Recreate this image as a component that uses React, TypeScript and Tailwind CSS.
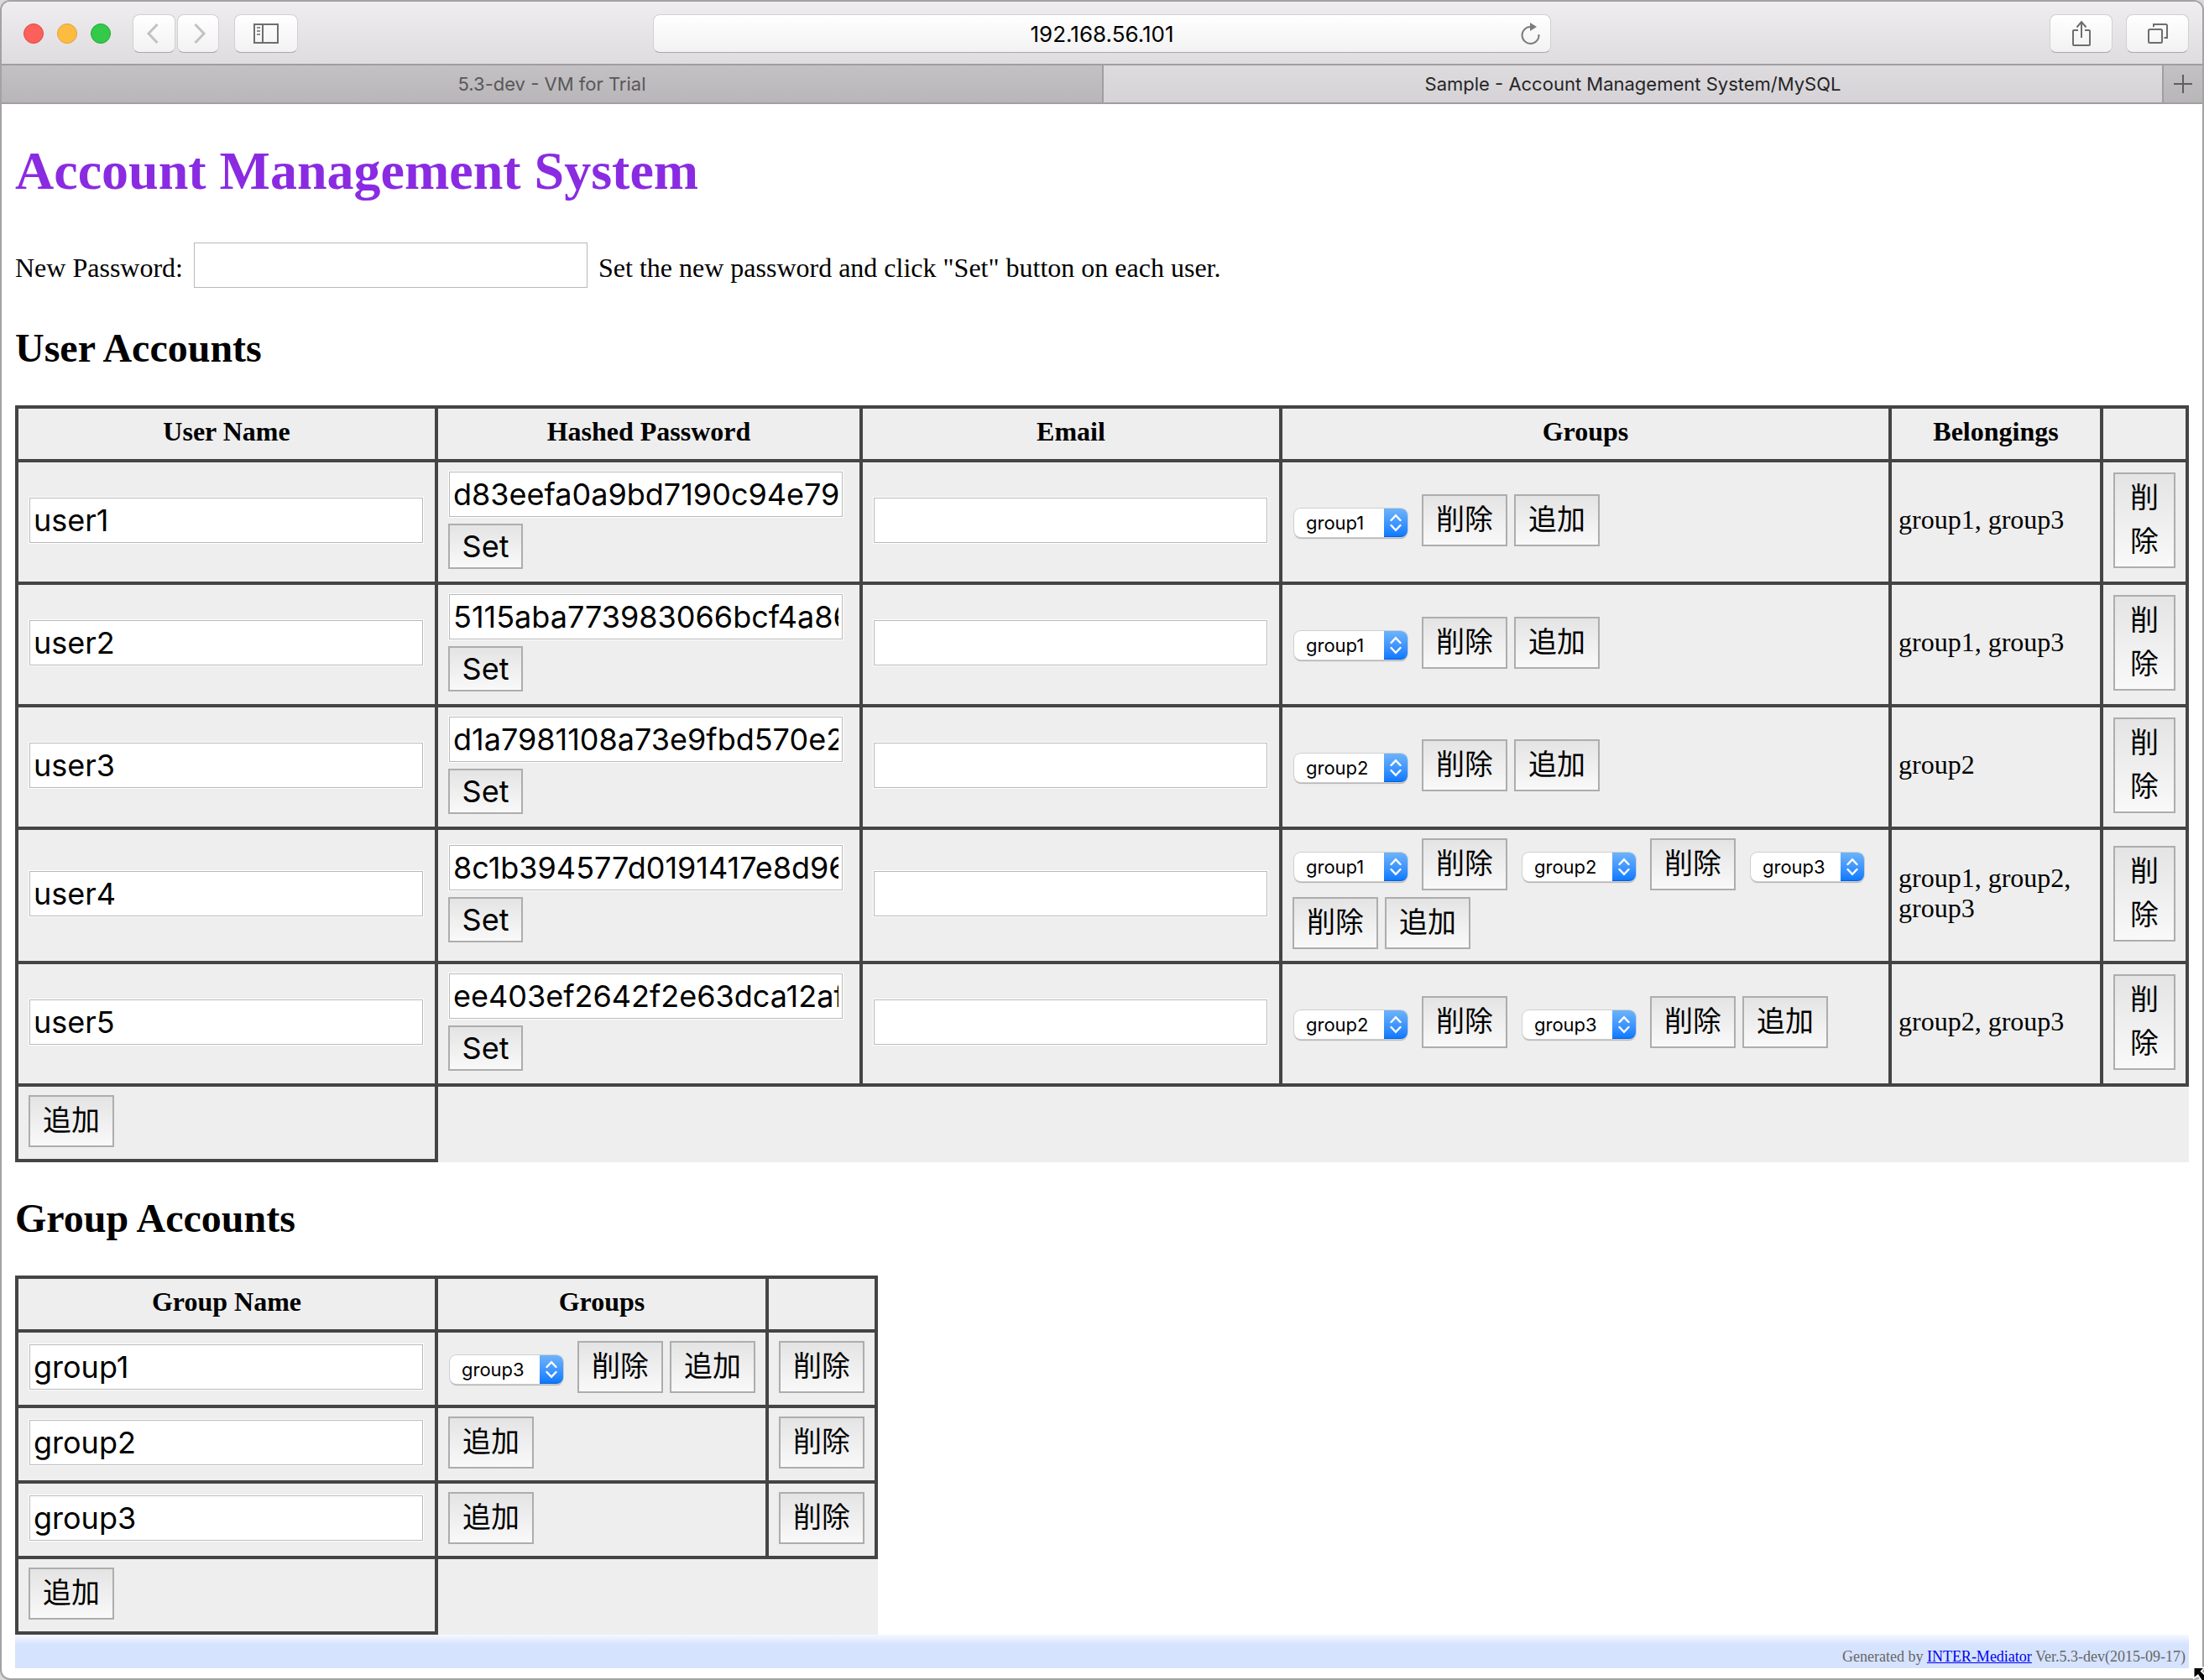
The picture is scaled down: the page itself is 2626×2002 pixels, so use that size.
import React, { useId, useState } from "react";

const GROUPS = ["group1", "group2", "group3"];

type User = { name: string; hash: string; groups: string[]; belongings: string };

const USERS: User[] = [
  { name: "user1", hash: "d83eefa0a9bd7190c94e7911688503737a99db0154455354", groups: ["group1"], belongings: "group1, group3" },
  { name: "user2", hash: "5115aba773983066bcf4a8655ddac8525c1d3c6354455354", groups: ["group1"], belongings: "group1, group3" },
  { name: "user3", hash: "d1a7981108a73e9fbd570e23ecca87c2c5cb967554455354", groups: ["group2"], belongings: "group2" },
  { name: "user4", hash: "8c1b394577d0191417e8d962c5f6e3ca15068f8254455354", groups: ["group1", "group2", "group3"], belongings: "group1, group2, group3" },
  { name: "user5", hash: "ee403ef2642f2e63dca12af72856620e6a24102d54455354", groups: ["group2", "group3"], belongings: "group2, group3" },
];

const GROUP_ROWS: { name: string; groups: string[] }[] = [
  { name: "group1", groups: ["group3"] },
  { name: "group2", groups: [] },
  { name: "group3", groups: [] },
];

const CELL = "border-4 border-[#444] px-3 pt-2.5 pb-3.5 text-left align-middle";
const HEAD = "h-16 border-4 border-[#444] px-2 pb-1.5 text-center align-middle font-bold";

function TextField({ label, initial = "" }: { label: string; initial?: string }) {
  const [value, setValue] = useState(initial);
  return (
    <input
      type="text"
      aria-label={label}
      value={value}
      onChange={(e) => setValue(e.target.value)}
      className="ml-px block h-[54px] w-full max-w-[469px] border border-[#b9b9b9] bg-white px-1 font-[Inter,sans-serif] text-[36px] leading-none text-black outline outline-white"
    />
  );
}

function PushButton({ children, className = "" }: { children: React.ReactNode; className?: string }) {
  return (
    <button
      type="button"
      className={
        "border-2 border-[#adadad] bg-linear-to-b from-[#e4e4e4] to-[#f9f9f9] px-[15px] pb-1.5 font-['Noto_Sans_CJK_JP',sans-serif] text-[34px] leading-[52px] text-black " +
        className
      }
    >
      {children}
    </button>
  );
}

function GroupSelect({ initial, label }: { initial: string; label: string }) {
  const [value, setValue] = useState(initial);
  return (
    <div className="relative mt-1.5 mr-[9px] ml-0.5 h-[34px] w-[135px] rounded-lg bg-white shadow-[0_0_0_1px_#cfcfcf,0_2px_1px_#b0b0b0]">
      <select
        aria-label={label}
        value={value}
        onChange={(e) => setValue(e.target.value)}
        className="block h-full w-full appearance-none bg-transparent pl-3.5 font-[Inter,sans-serif] text-[22px] leading-7 text-black"
      >
        {GROUPS.map((g) => (
          <option key={g}>{g}</option>
        ))}
      </select>
      <span className="pointer-events-none absolute inset-y-0 right-0 flex w-7 items-center justify-center rounded-r-lg border-b border-[#0560e0] bg-linear-to-b from-[#6cb3fa] to-[#087aff]">
        <svg width="14" height="22" viewBox="0 0 14 22" fill="none" stroke="#fff" strokeWidth="2.400" strokeLinecap="round">
          <path d="M1.500 8 7 2.200 12.500 8M1.500 14 7 19.800 12.500 14" />
        </svg>
      </span>
    </div>
  );
}

function GroupPicker({ groups, owner }: { groups: string[]; owner: string }) {
  return (
    <div className="flex flex-wrap items-center gap-2">
      {groups.map((g, i) => (
        <React.Fragment key={g}>
          <GroupSelect initial={g} label={`${owner} group ${i + 1}`} />
          <PushButton className={i < groups.length - 1 ? "mr-2" : ""}>削除</PushButton>
        </React.Fragment>
      ))}
      <PushButton>追加</PushButton>
    </div>
  );
}

function ToolButton({ label, className, children }: { label: string; className: string; children: React.ReactNode }) {
  return (
    <button
      type="button"
      aria-label={label}
      className={
        "flex h-[46px] items-center justify-center rounded-lg border border-[#d2d0d2] border-b-[#a9a7a9] bg-linear-to-b from-white to-[#f2f2f2] " +
        className
      }
    >
      {children}
    </button>
  );
}

function Toolbar() {
  return (
    <header className="flex h-[74px] items-center bg-linear-to-b from-[#efedf0] to-[#dedcdf] px-4 pt-0.5">
      <div className="flex flex-1 items-center">
        <div className="ml-2.5 flex gap-4">
          <span className="size-6 rounded-full border border-[#e2463f] bg-[#fc605b]" />
          <span className="size-6 rounded-full border border-[#e1a03a] bg-[#fdbc40]" />
          <span className="size-6 rounded-full border border-[#24a83a] bg-[#33c949]" />
        </div>
        <div className="ml-[26px] flex gap-0.5">
          <ToolButton label="Back" className="w-[51px] pr-1">
            <svg width="16" height="26" viewBox="0 0 16 26" fill="none" stroke="#c2c2c2" strokeWidth="3"><path d="M13.500 2 3 13l10.500 11" /></svg>
          </ToolButton>
          <ToolButton label="Forward" className="w-[50px] pl-1">
            <svg width="16" height="26" viewBox="0 0 16 26" fill="none" stroke="#c2c2c2" strokeWidth="3"><path d="M2.500 2 13 13 2.500 24" /></svg>
          </ToolButton>
        </div>
        <ToolButton label="Sidebar" className="ml-[18px] w-[76px]">
          <svg width="30" height="24" viewBox="0 0 30 24" fill="none" stroke="#6e6e6e" strokeWidth="2">
            <rect x="1" y="1" width="28" height="22" />
            <path d="M11 1v22" />
            <path d="M4 5h4M4 9h4M4 13h4" stroke="#8e8e8e" />
          </svg>
        </ToolButton>
      </div>
      <div className="relative flex h-[46px] w-[1070px] items-center rounded-lg border border-[#d2d0d2] border-b-[#a9a7a9] bg-linear-to-b from-white to-[#f2f2f2]">
        <input
          type="text"
          aria-label="Address"
          defaultValue="192.168.56.101"
          className="w-full bg-transparent pt-0.5 text-center font-[Inter,sans-serif] text-[26px] leading-8 text-black"
        />
        <button type="button" aria-label="Reload" className="absolute right-3">
          <svg width="23" height="28" viewBox="0 0 23 28" fill="none">
            <path d="M11 6a10 10 0 1 0 10.500 9" stroke="#7c7c7c" strokeWidth="2" />
            <path d="M11 1v10l8-5z" fill="#7c7c7c" />
          </svg>
        </button>
      </div>
      <div className="flex flex-1 justify-end gap-4">
        <ToolButton label="Share" className="w-[75px]">
          <svg width="24" height="32" viewBox="0 0 24 32" fill="none" stroke="#6e6e6e" strokeWidth="2">
            <path d="M8 12H3a1 1 0 0 0-1 1v16a1 1 0 0 0 1 1h18a1 1 0 0 0 1-1V13a1 1 0 0 0-1-1h-5M12 21V2M6.500 8.500 12 2l5.500 6.500" />
          </svg>
        </ToolButton>
        <ToolButton label="Show tabs" className="w-[75px]">
          <svg width="26" height="26" viewBox="0 0 26 26" fill="none" stroke="#6e6e6e" strokeWidth="2">
            <rect x="2" y="8" width="16" height="16" rx="1.500" />
            <path d="M8 5V2h14.500a1.500 1.500 0 0 1 1.500 1.500V18h-3.500" />
          </svg>
        </ToolButton>
      </div>
    </header>
  );
}

function TabBar() {
  return (
    <nav className="flex h-12 border-y-2 border-[#a09ea0] font-[Inter,sans-serif] text-[22px] leading-7">
      <button type="button" className="w-1/2 bg-linear-to-b from-[#c3c1c3] to-[#b8b6b8] text-[#59575a]">5.3-dev - VM for Trial</button>
      <button type="button" className="flex-1 border-x-2 border-[#a09ea0] bg-linear-to-b from-[#dddbde] to-[#d5d3d6] text-[#262527]">
        Sample - Account Management System/MySQL
      </button>
      <button type="button" aria-label="New tab" className="flex w-[46px] items-center justify-center bg-linear-to-b from-[#c3c1c3] to-[#b8b6b8]">
        <svg width="22" height="22" viewBox="0 0 22 22" stroke="#5f5d5f" strokeWidth="2"><path d="M11 0v22M0 11h22" /></svg>
      </button>
    </nav>
  );
}

export default function App() {
  const pw = useId();
  const [password, setPassword] = useState("");
  return (
    <div className="relative flex min-h-screen flex-col bg-[#d9d9d9]">
      <div className="flex-1 overflow-hidden rounded-xl border-2 border-[#a3a3a3] bg-white">
        <Toolbar />
        <TabBar />
        <main className="px-4 pb-2 font-['Liberation_Serif','Noto_Sans_CJK_JP',serif] text-[32px] leading-9 text-black">
          <h1 className="pt-11 text-[64px] leading-[72px] font-bold text-[#8a2be2]">Account Management System</h1>
          <div className="mt-[49px] flex items-center">
            <label htmlFor={pw} className="mr-[13px] pt-1.5">New Password:</label>
            <input
              id={pw}
              type="text"
              value={password}
              onChange={(e) => setPassword(e.target.value)}
              className="h-[54px] w-[469px] border border-[#b9b9b9] bg-white px-1 font-[Inter,sans-serif] text-[36px]"
            />
            <p className="ml-[13px] pt-1.5">Set the new password and click "Set" button on each user.</p>
          </div>
          <h2 className="mt-11 text-[48px] leading-[56px] font-bold">User Accounts</h2>
          <table className="mt-10 w-full table-fixed border-collapse bg-[#eee]">
            <colgroup>
              <col className="w-[500px]" />
              <col className="w-[506px]" />
              <col className="w-[500px]" />
              <col />
              <col className="w-[252px]" />
              <col className="w-[102px]" />
            </colgroup>
            <thead>
              <tr>
                <th className={HEAD}>User Name</th>
                <th className={HEAD}>Hashed Password</th>
                <th className={HEAD}>Email</th>
                <th className={HEAD}>Groups</th>
                <th className={HEAD}>Belongings</th>
                <th className={HEAD} />
              </tr>
            </thead>
            <tbody>
              {USERS.map((u) => (
                <tr key={u.name} className="h-[146px]">
                  <td className={CELL}><TextField label="User Name" initial={u.name} /></td>
                  <td className={CELL}>
                    <div className="flex flex-col items-start gap-2">
                      <TextField label="Hashed Password" initial={u.hash} />
                      <button
                        type="button"
                        className="h-[54px] w-[89px] border-2 border-[#adadad] bg-linear-to-b from-[#e4e4e4] to-[#f9f9f9] font-[Inter,sans-serif] text-[36px] leading-none"
                      >
                        Set
                      </button>
                    </div>
                  </td>
                  <td className={CELL}><TextField label="Email" /></td>
                  <td className={CELL}><GroupPicker groups={u.groups} owner={u.name} /></td>
                  <td className="border-4 border-[#444] px-2 pb-1.5 align-middle">{u.belongings}</td>
                  <td className={CELL}>
                    <button
                      type="button"
                      className="block w-full border-2 border-[#adadad] bg-linear-to-b from-[#e4e4e4] to-[#f9f9f9] px-4 pb-1.5 font-['Noto_Sans_CJK_JP',sans-serif] text-[34px] leading-[52px]"
                    >
                      削除
                    </button>
                  </td>
                </tr>
              ))}
              <tr className="h-[90px]">
                <td className={CELL}><PushButton className="block">追加</PushButton></td>
              </tr>
            </tbody>
          </table>
          <h2 className="mt-[39px] text-[48px] leading-[56px] font-bold">Group Accounts</h2>
          <table className="mt-10 w-[1028px] table-fixed border-collapse bg-[#eee]">
            <colgroup>
              <col className="w-[500px]" />
              <col className="w-[394px]" />
              <col className="w-[130px]" />
            </colgroup>
            <thead>
              <tr>
                <th className={HEAD}>Group Name</th>
                <th className={HEAD}>Groups</th>
                <th className={HEAD} />
              </tr>
            </thead>
            <tbody>
              {GROUP_ROWS.map((g) => (
                <tr key={g.name} className="h-[90px]">
                  <td className={CELL}><TextField label="Group Name" initial={g.name} /></td>
                  <td className={CELL}><GroupPicker groups={g.groups} owner={g.name} /></td>
                  <td className={CELL}><PushButton className="block">削除</PushButton></td>
                </tr>
              ))}
              <tr className="h-[90px]">
                <td className={CELL}><PushButton className="block">追加</PushButton></td>
              </tr>
            </tbody>
          </table>
          <footer className="bg-linear-to-b from-[#f5f8ff] to-[#d6e3fe] to-30% pt-4 pr-1 pb-1 text-right text-[18px] leading-5 text-[#666]">
            Generated by <a href="#inter-mediator" className="text-[#0000ee] underline">INTER-Mediator</a> Ver.5.3-dev(2015-09-17)
          </footer>
        </main>
      </div>
      <svg className="absolute right-0 bottom-0" width="14" height="17" viewBox="0 0 14 17">
        <path d="M2.500 3H13L9.500 6.500 14 11v6h-2.500L7 10l-4.500 3.500z" fill="#000" stroke="#fff" strokeWidth="3" paintOrder="stroke" />
      </svg>
    </div>
  );
}
